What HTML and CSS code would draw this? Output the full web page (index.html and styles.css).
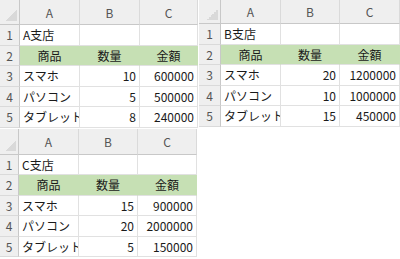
FILE: index.html
```html
<!DOCTYPE html>
<html lang="ja">
<head>
    <meta charset="UTF-8">
    <title>支店別売上</title>
    <link rel="stylesheet" href="styles.css">
</head>
<body>
    <div class="board">
        <!-- A支店 -->
        <div class="sheet sheet-a">
            <div class="corner"></div>
            <div class="col-head">A</div>
            <div class="col-head">B</div>
            <div class="col-head">C</div>

            <div class="row-head">1</div>
            <div class="cell">A支店</div>
            <div class="cell"></div>
            <div class="cell"></div>

            <div class="row-head">2</div>
            <div class="cell title">商品</div>
            <div class="cell title">数量</div>
            <div class="cell title">金額</div>

            <div class="row-head">3</div>
            <div class="cell">スマホ</div>
            <div class="cell num">10</div>
            <div class="cell num">600000</div>

            <div class="row-head">4</div>
            <div class="cell">パソコン</div>
            <div class="cell num">5</div>
            <div class="cell num">500000</div>

            <div class="row-head">5</div>
            <div class="cell">タブレット</div>
            <div class="cell num">8</div>
            <div class="cell num">240000</div>
        </div>

        <!-- B支店 -->
        <div class="sheet sheet-b">
            <div class="corner"></div>
            <div class="col-head">A</div>
            <div class="col-head">B</div>
            <div class="col-head">C</div>

            <div class="row-head">1</div>
            <div class="cell">B支店</div>
            <div class="cell"></div>
            <div class="cell"></div>

            <div class="row-head">2</div>
            <div class="cell title">商品</div>
            <div class="cell title">数量</div>
            <div class="cell title">金額</div>

            <div class="row-head">3</div>
            <div class="cell">スマホ</div>
            <div class="cell num">20</div>
            <div class="cell num">1200000</div>

            <div class="row-head">4</div>
            <div class="cell">パソコン</div>
            <div class="cell num">10</div>
            <div class="cell num">1000000</div>

            <div class="row-head">5</div>
            <div class="cell">タブレット</div>
            <div class="cell num">15</div>
            <div class="cell num">450000</div>
        </div>

        <!-- C支店 -->
        <div class="sheet sheet-c">
            <div class="corner"></div>
            <div class="col-head">A</div>
            <div class="col-head">B</div>
            <div class="col-head">C</div>

            <div class="row-head">1</div>
            <div class="cell">C支店</div>
            <div class="cell"></div>
            <div class="cell"></div>

            <div class="row-head">2</div>
            <div class="cell title">商品</div>
            <div class="cell title">数量</div>
            <div class="cell title">金額</div>

            <div class="row-head">3</div>
            <div class="cell">スマホ</div>
            <div class="cell num">15</div>
            <div class="cell num">900000</div>

            <div class="row-head">4</div>
            <div class="cell">パソコン</div>
            <div class="cell num">20</div>
            <div class="cell num">2000000</div>

            <div class="row-head">5</div>
            <div class="cell">タブレット</div>
            <div class="cell num">5</div>
            <div class="cell num">150000</div>
        </div>
    </div>
</body>
</html>
```

FILE: styles.css
```css
body {
    margin: 0;
    background-color: #fff;
    font-family: "Noto Sans CJK JP", "Noto Sans", sans-serif;
    font-size: 12px;
    color: #1a1a1a;
}
.board {
    display: grid;
    grid-template-columns: 199px 201px;
    row-gap: 1px;
    align-items: start;
}
.sheet {
    display: grid;
    background-color: #fff;
}
.sheet-a {
    grid-template-columns: 20px 60px 60px 58px;
    grid-template-rows: 25px repeat(5, 20.5px);
}
.sheet-b {
    grid-template-columns: 22px 60px 59px 60px;
    grid-template-rows: 24px repeat(5, 20.5px);
}
.sheet-c {
    grid-column: 1;
    grid-template-columns: 19px 60px 59px 59px;
    grid-template-rows: 26px repeat(5, 20.5px);
}
.sheet > div {
    box-sizing: border-box;
    display: flex;
    align-items: center;
    overflow: hidden;
    white-space: nowrap;
}
.corner {
    background: #efefef linear-gradient(to bottom right, transparent 50%, #d9d9d9 50%) no-repeat right 2px bottom 3px / 11px 11px;
    border-right: 1px solid #c8c8c8;
    border-bottom: 1px solid #c8c8c8;
}
.col-head {
    justify-content: center;
    background-color: #efefef;
    color: #555;
    border-right: 1px solid #dadada;
    border-bottom: 1px solid #c8c8c8;
}
.row-head {
    justify-content: center;
    background-color: #efefef;
    color: #555;
    border-right: 1px solid #c8c8c8;
    border-bottom: 1px solid #dadada;
}
.cell {
    padding: 0 3px;
    border-right: 1px solid #e1e1e1;
    border-bottom: 1px solid #e1e1e1;
}
.cell.num {
    justify-content: flex-end;
}
.cell.title {
    justify-content: center;
    background-color: #c6e0b4;
    border-right-color: #c6e0b4;
}
```
